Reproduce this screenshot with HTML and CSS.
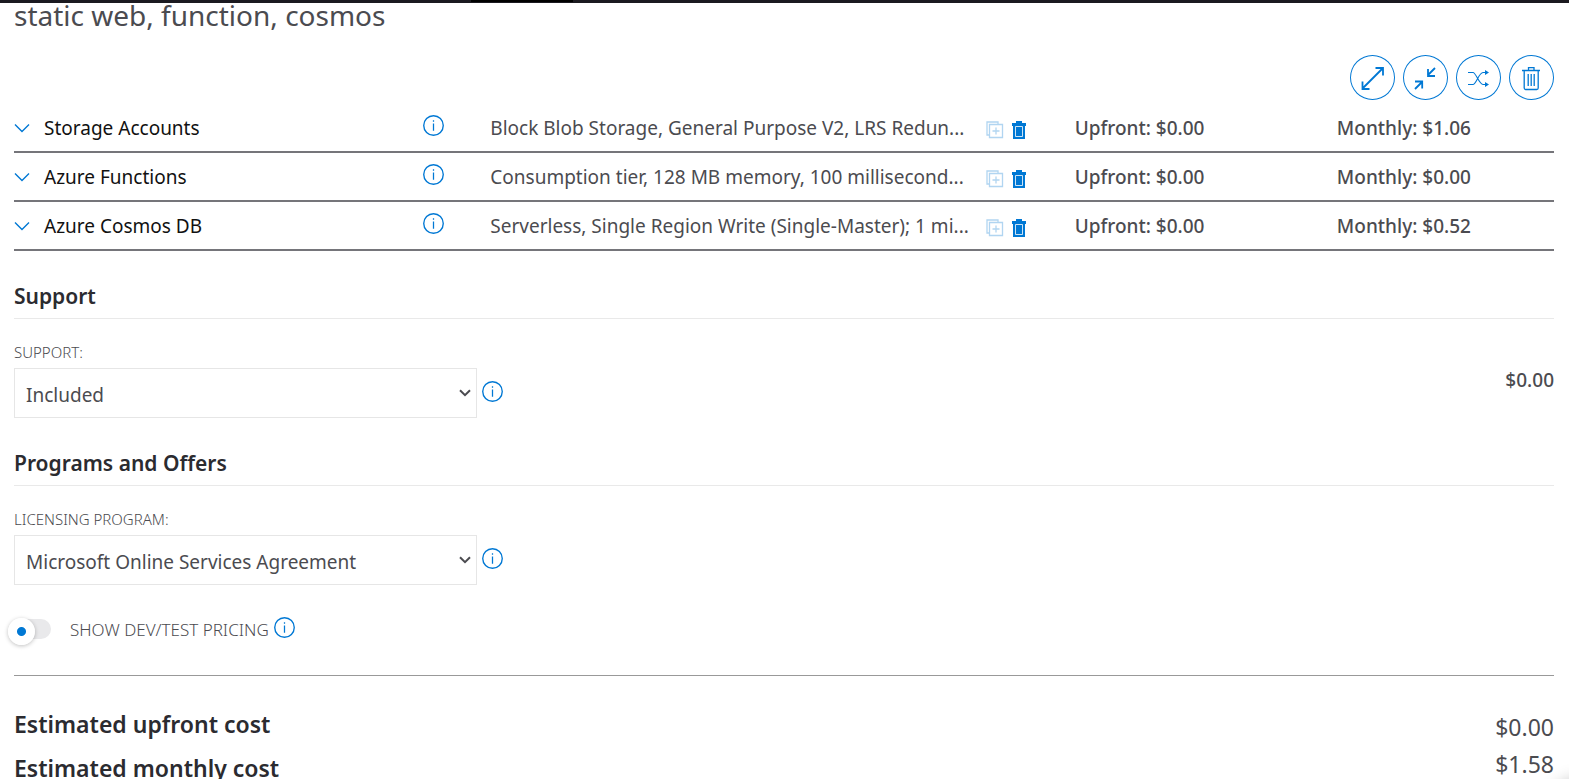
FILE: index.html
```
<!DOCTYPE html>
<html lang="en">
<head>
<meta charset="utf-8">
<title>Pricing estimate</title>
<link rel="stylesheet" href="styles.css">
</head>
<body>
<svg class="sprite" aria-hidden="true">
  <symbol id="info" viewBox="0 0 20 20"><circle cx="10" cy="10" r="9.300" fill="none" stroke="currentColor" stroke-width="1.300"/><path d="M10 8v7M10 5v1.500" fill="none" stroke="currentColor" stroke-width="1.200"/></symbol>
  <symbol id="chevron" viewBox="0 0 16 16"><path d="M1 4.500l7 7 7-7" fill="none" stroke="currentColor" stroke-width="1.400"/></symbol>
  <symbol id="copy" viewBox="0 0 18 18"><path d="M12 3V1H1v13h2M3.500 3.500h13v13h-13zM10 6.500v7M6.500 10h7" fill="none" stroke="currentColor" stroke-width="1.300"/></symbol>
  <symbol id="bin" viewBox="0 0 16 18"><path d="M1 2h4V0h6v2h4v3h-1v13H2V5H1z" fill="currentColor"/><path d="M4.500 5.500h7v10h-7z" fill="none" stroke="#fff" stroke-opacity=".8"/></symbol>
</svg>
<div class="topbar"><span class="topbar-tab"></span></div>
<main class="page">
  <h1 class="title">static web, function, cosmos</h1>
  <div class="toolbar">
    <button class="round" aria-label="Expand all"><svg viewBox="0 0 45 45"><path d="M12.500 33.500L33 13M25.500 13H33v7.500M12.500 26.500V34H19.500" fill="none" stroke="currentColor" stroke-width="1.800"/></svg></button>
    <button class="round" aria-label="Collapse all"><svg viewBox="0 0 45 45"><path d="M32 13l-7.500 7.500M25 14v7h7M12 34l7.500-7.500M12 26.500h7.200v7" fill="none" stroke="currentColor" stroke-width="1.800"/></svg></button>
    <button class="round" aria-label="Reorder"><svg viewBox="0 0 45 45"><path d="M12 17.500h5c3 0 6 12 10 12h4M12 29.500h5c3 0 6-12 10-12h4" fill="none" stroke="currentColor" stroke-width="1.100"/><path d="M29 15l4 2.500-4 2.500zM29 27l4 2.500-4 2.500z" fill="currentColor"/></svg></button>
    <button class="round" aria-label="Delete all"><svg viewBox="0 0 45 45"><path d="M13 15.500h18M19.500 15v-2.300h5.500V15M15.200 16v17q0 1.500 1.500 1.500h11q1.500 0 1.500-1.500V16M19.200 19v12M22.200 19v12M25.200 19v12" fill="none" stroke="currentColor" stroke-width="1.300"/></svg></button>
  </div>

  <section class="services">
    <div class="service">
      <button class="service-name"><svg class="chevron"><use href="#chevron"/></svg>Storage Accounts</button>
      <button class="info" aria-label="More info"><svg><use href="#info"/></svg></button>
      <span class="service-desc">Block Blob Storage, General Purpose V2, LRS Redun...</span>
      <span class="service-actions"><button class="copy" aria-label="Clone"><svg><use href="#copy"/></svg></button><button class="bin" aria-label="Delete"><svg><use href="#bin"/></svg></button></span>
      <span class="cost">Upfront: $0.00</span>
      <span class="cost">Monthly: $1.06</span>
    </div>
    <div class="service">
      <button class="service-name"><svg class="chevron"><use href="#chevron"/></svg>Azure Functions</button>
      <button class="info" aria-label="More info"><svg><use href="#info"/></svg></button>
      <span class="service-desc">Consumption tier, 128 MB memory, 100 millisecond...</span>
      <span class="service-actions"><button class="copy" aria-label="Clone"><svg><use href="#copy"/></svg></button><button class="bin" aria-label="Delete"><svg><use href="#bin"/></svg></button></span>
      <span class="cost">Upfront: $0.00</span>
      <span class="cost">Monthly: $0.00</span>
    </div>
    <div class="service">
      <button class="service-name"><svg class="chevron"><use href="#chevron"/></svg>Azure Cosmos DB</button>
      <button class="info" aria-label="More info"><svg><use href="#info"/></svg></button>
      <span class="service-desc">Serverless, Single Region Write (Single-Master); 1 mi...</span>
      <span class="service-actions"><button class="copy" aria-label="Clone"><svg><use href="#copy"/></svg></button><button class="bin" aria-label="Delete"><svg><use href="#bin"/></svg></button></span>
      <span class="cost">Upfront: $0.00</span>
      <span class="cost">Monthly: $0.52</span>
    </div>
  </section>

  <section>
    <h2 class="heading">Support</h2>
    <div class="field-row">
      <div class="field">
        <label class="label" for="support">SUPPORT:</label>
        <div class="control">
          <span class="select-box"><select id="support" class="select"><option>Included</option></select><svg class="caret" viewBox="0 0 12 8"><path d="M1 1.200l5 5 5-5" fill="none" stroke="currentColor" stroke-width="2"/></svg></span>
          <button class="info" aria-label="About support"><svg><use href="#info"/></svg></button>
        </div>
      </div>
      <span class="cost support-cost">$0.00</span>
    </div>
  </section>

  <section>
    <h2 class="heading">Programs and Offers</h2>
    <div class="field-row">
      <div class="field">
        <label class="label" for="program">LICENSING PROGRAM:</label>
        <div class="control">
          <span class="select-box"><select id="program" class="select"><option>Microsoft Online Services Agreement</option></select><svg class="caret" viewBox="0 0 12 8"><path d="M1 1.200l5 5 5-5" fill="none" stroke="currentColor" stroke-width="2"/></svg></span>
          <button class="info" aria-label="About licensing programs"><svg><use href="#info"/></svg></button>
        </div>
      </div>
    </div>
    <div class="toggle-row">
      <input class="toggle" type="checkbox" id="devtest">
      <label class="toggle-label" for="devtest">SHOW DEV/TEST PRICING</label>
      <button class="info" aria-label="About dev/test pricing"><svg><use href="#info"/></svg></button>
    </div>
  </section>

  <section class="totals">
    <div class="total-names"><div>Estimated upfront cost</div><div>Estimated monthly cost</div></div>
    <div class="total-values"><div>$0.00</div><div>$1.58</div></div>
  </section>
</main>
<div class="launcher"></div>
</body>
</html>
```
FILE: styles.css
```
* { box-sizing: border-box; }
body {
  margin: 0;
  height: 100vh;
  overflow: hidden;
  background: #fff;
  color: #4b4b50;
  font: 19px/26px "Noto Sans", "Open Sans", sans-serif;
}
button { border: 0; padding: 0; background: none; color: #0078d4; font: inherit; cursor: pointer; }
svg { display: block; }
.sprite { position: absolute; width: 0; height: 0; }
.topbar { height: 3px; padding-left: 30%; background: #1b1a20; }
.topbar-tab { display: block; width: 102px; height: 2px; background: #000; }
.page { padding: 0 15px 0 14px; }
.title { margin: 0; height: 52px; font-size: 28px; font-weight: 400; line-height: 24px; }

.toolbar { display: flex; justify-content: flex-end; gap: 8px; margin-bottom: 4px; }
.round { width: 45px; height: 45px; border-radius: 50%; box-shadow: inset 0 0 0 1px #0078d4; }
.round svg { width: 45px; height: 45px; }

.service {
  display: grid;
  grid-template-columns: minmax(0, 409fr) minmax(0, 67fr) minmax(0, 495fr) minmax(0, 89fr) minmax(0, 262fr) minmax(0, 217fr);
  align-items: center;
  height: 49px;
  border-bottom: 2px solid #75757a;
}
.service-name { display: flex; align-items: center; gap: 14px; color: #111; text-align: left; }
.chevron { width: 16px; height: 16px; color: #0078d4; }
.info { width: 21px; height: 21px; }
.info svg { width: 21px; height: 21px; }
.service .info { margin-bottom: 5px; }
.service-desc { overflow: hidden; white-space: nowrap; }
.service-actions { display: flex; align-items: center; gap: 7px; padding-top: 4px; }
.copy { opacity: .3; }
.copy svg { width: 18px; height: 18px; }
.bin svg { width: 16px; height: 18px; }
.cost { font-weight: 500; }

.heading {
  margin: 30px 0 0;
  padding-bottom: 7px;
  border-bottom: 1px solid #e9e9e9;
  color: #2b2b30;
  font-size: 21px;
  font-weight: 600;
  line-height: 30px;
}
.field-row { display: flex; justify-content: space-between; padding-top: 24px; }
.field { width: 80%; }
.label { display: block; height: 25px; font-size: 15px; font-weight: 300; line-height: 18px; }
.control { display: flex; align-items: center; gap: 5px; }
.control .info { margin-bottom: 3px; }
.select-box { display: grid; width: 38%; min-width: 300px; max-width: 463px; align-items: center; }
.select {
  grid-area: 1 / 1;
  width: 100%;
  height: 50px;
  padding: 3px 32px 0 11px;
  appearance: none;
  border: 1px solid #e6e6e6;
  border-radius: 0;
  background: #fff;
  color: inherit;
  font: inherit;
}
.caret { grid-area: 1 / 1; justify-self: end; width: 12px; height: 8px; margin-right: 6px; pointer-events: none; }
.support-cost { padding-top: 24px; }

.toggle-row { display: flex; align-items: center; height: 90px; }
.toggle {
  display: flex;
  align-items: center;
  appearance: none;
  width: 31px;
  height: 20px;
  margin: 0 19px 2px 6px;
  border-radius: 0 10px 10px 0;
  background: #e9e9eb;
}
.toggle::before {
  content: "";
  flex: none;
  width: 27px;
  height: 27px;
  margin: 4px 0 0 -12px;
  border-radius: 50%;
  background: radial-gradient(circle, #0078d4 4px, #fff 5px);
  box-shadow: 0 1px 4px rgba(0, 0, 0, .25);
}
.toggle-label { margin-right: 5px; font-size: 17px; font-weight: 300; }
.toggle-row .info { margin-bottom: 6px; }

.totals { display: flex; justify-content: space-between; padding-top: 26px; border-top: 1px solid #999; }
.total-names { color: #2b2b30; font-size: 23px; font-weight: 600; line-height: 44px; }
.total-values { padding-top: 7px; font-size: 23px; line-height: 37px; }
.launcher { position: fixed; right: -40px; bottom: -60px; width: 60px; height: 60px; border-radius: 50%; box-shadow: 0 0 16px rgba(0, 0, 0, .25); }
```
